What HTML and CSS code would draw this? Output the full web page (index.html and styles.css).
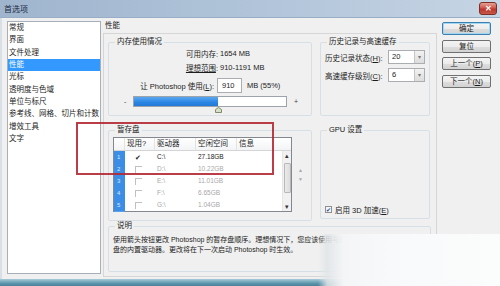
FILE: index.html
```html
<!DOCTYPE html>
<html lang="zh-CN">
<head>
<meta charset="utf-8">
<title>首选项</title>
<link rel="stylesheet" href="styles.css">
</head>
<body>
<div class="window">
  <div class="titlebar">
    <span class="title">首选项</span>
    <span class="close">✕</span>
  </div>
  <div class="content">
    <ul class="sidebar">
      <li>常规</li>
      <li>界面</li>
      <li>文件处理</li>
      <li class="sel">性能</li>
      <li>光标</li>
      <li>透明度与色域</li>
      <li>单位与标尺</li>
      <li>参考线、网格、切片和计数</li>
      <li>增效工具</li>
      <li>文字</li>
    </ul>
    <div class="main">
      <div class="main-title">性能</div>
      <div class="panel">
        <div class="row1">
          <fieldset class="box mem">
            <legend>内存使用情况</legend>
            <div class="mrow r1"><span class="mlabel">可用内存:</span><span class="mval">1654 MB</span></div>
            <div class="mrow r2"><span class="mlabel"><u>理想范围</u>:</span><span class="mval">910-1191 MB</span></div>
            <div class="mrow r3"><span class="mlabel narrow">让 Photoshop 使用(<u>L</u>):</span><span class="input">910</span><span class="unit">MB (55%)</span></div>
            <div class="slider">
              <span class="pm">-</span>
              <span class="track"><span class="fill"></span>
                <svg class="thumb" width="7" height="6" viewBox="0 0 7 6"><path d="M0.5 5.5 L0.5 2.5 L3.5 0.5 L6.5 2.5 L6.5 5.5 Z" fill="#d8e0c8" stroke="#7f8f6a" stroke-width="1"/></svg>
              </span>
              <span class="pm plus">+</span>
            </div>
          </fieldset>
          <fieldset class="box hist">
            <legend>历史记录与高速缓存</legend>
            <div class="hrow"><span class="hlabel">历史记录状态(<u>H</u>):</span><span class="select"><span class="sval">20</span><span class="dd">▾</span></span></div>
            <div class="hrow"><span class="hlabel">高速缓存级别(<u>C</u>):</span><span class="select"><span class="sval">6</span><span class="dd">▾</span></span></div>
          </fieldset>
        </div>
        <div class="row2">
          <fieldset class="box scratch">
            <legend>暂存盘</legend>
            <div class="scratch-body">
              <div class="table">
                <div class="thead">
                  <span></span><span>现用?</span><span>驱动器</span><span>空闲空间</span><span>信息</span>
                </div>
                <div class="tbody">
                  <div class="rows">
                    <div class="tr"><span class="idx">1</span><span class="chk"><span class="tick">✔</span></span><span>C:\</span><span>27.18GB</span><span></span></div>
                    <div class="tr off"><span class="idx">2</span><span class="chk"><span class="cb"></span></span><span>D:\</span><span>10.22GB</span><span></span></div>
                    <div class="tr off"><span class="idx">3</span><span class="chk"><span class="cb"></span></span><span>E:\</span><span>11.01GB</span><span></span></div>
                    <div class="tr off"><span class="idx">4</span><span class="chk"><span class="cb"></span></span><span>F:\</span><span>6.65GB</span><span></span></div>
                    <div class="tr off"><span class="idx">5</span><span class="chk"><span class="cb"></span></span><span>G:\</span><span>1.04GB</span><span></span></div>
                  </div>
                  <div class="scrollbar">
                    <span class="sarrow">▴</span>
                    <span class="sthumb"></span>
                    <span class="sarrow">▾</span>
                  </div>
                </div>
              </div>
              <div class="updown"><span>▲</span><span>▼</span></div>
            </div>
          </fieldset>
          <fieldset class="box gpu">
            <legend>GPU 设置</legend>
            <div class="gpu-check"><span class="gcb">✔</span><span>启用 3D 加速(<u>E</u>)</span></div>
          </fieldset>
        </div>
        <fieldset class="box desc">
          <legend>说明</legend>
          <p class="dtext">使用箭头按钮更改 Photoshop 的暂存盘顺序。理想情况下，您应该使用与启动盘不同的硬盘</p>
          <p class="dtext">盘的内置驱动器。更改将在下一次启动 Photoshop 时生效。</p>
        </fieldset>
      </div>
    </div>
    <div class="buttons">
      <span class="btn default">确定</span>
      <span class="btn">复位</span>
      <span class="btn">上一个(<u>P</u>)</span>
      <span class="btn">下一个(<u>N</u>)</span>
    </div>
  </div>
  <div class="bottombar"></div>
  <div class="redmark"></div>
  <div class="watermark"></div>
</div>
</body>
</html>
```
FILE: styles.css
```css
* { box-sizing: border-box; }
html, body { margin: 0; padding: 0; }
body {
  width: 500px;
  height: 286px;
  overflow: hidden;
  font-family: "Liberation Sans", "Noto Sans CJK SC", sans-serif;
  font-size: 7.5px;
  color: #1c1c1c;
  background: #f0f0f0;
}
u { text-decoration: underline; }

.window {
  position: relative;
  width: 500px;
  height: 286px;
  display: flex;
  flex-direction: column;
  background: #f0f0f0;
  overflow: hidden;
}

.titlebar {
  height: 18px;
  flex: none;
  display: flex;
  align-items: center;
  padding: 0 3px 0 4px;
  background: linear-gradient(90deg, #9fb5ce 0%, #b2c5da 55%, #c7d5e4 100%);
  border-bottom: 1px solid #98aec6;
}
.title { font-size: 8px; color: #1a2a3e; }
.close {
  margin-left: auto;
  width: 18px;
  height: 13px;
  border: 1px solid #7a3029;
  border-radius: 3px;
  background: linear-gradient(#e7a093 0%, #d0574a 45%, #b9352a 55%, #c9564a 100%);
  color: #fff;
  display: flex;
  align-items: center;
  justify-content: center;
  font-size: 8px;
  font-weight: bold;
}

.content {
  flex: 1;
  display: flex;
  padding: 3px 0 0 5px;
  border-left: 2px solid #d8dfe6;
}

.sidebar {
  list-style: none;
  margin: 0;
  padding: 0;
  width: 94px;
  height: 253px;
  background: #fff;
  border: 1px solid #a7afb8;
  flex: none;
}
.sidebar li {
  height: 12.33px;
  line-height: 12.33px;
  padding-left: 1px;
  white-space: nowrap;
  overflow: hidden;
}
.sidebar li.sel { background: #3399ff; color: #fff; }

.main {
  width: 334px;
  margin-left: 2px;
  flex: none;
}
.main-title {
  height: 12px;
  line-height: 10px;
  padding-left: 2px;
}
.panel {
  height: 244px;
  border: 1px solid #d6d6d6;
  padding: 3px 0 0 4px;
}

fieldset.box {
  margin: 0;
  padding: 0;
  border: 1px solid #d5dfe5;
  border-radius: 2px;
  min-width: 0;
}
fieldset.box legend {
  padding: 0 2px;
  margin-left: 6px;
  height: 10px;
  line-height: 10px;
}

.row1 { display: flex; gap: 8px; height: 79px; }
.mem { width: 204px; height: 79px; }
.hist { width: 110px; height: 79px; }

.mrow { display: flex; align-items: center; white-space: nowrap; }
.mrow.r1 { height: 13px; }
.mrow.r2 { height: 15px; }
.mrow.r3 { height: 16px; margin-top: 2px; }
.mlabel { width: 109px; text-align: right; }
.mlabel.narrow { width: 105px; }
.mval { margin-left: 2px; }
.input {
  margin-left: 3px;
  width: 25px;
  height: 15px;
  line-height: 13px;
  border: 1px solid #abadb3;
  background: #fff;
  padding-left: 4px;
}
.unit { margin-left: 5px; }

.slider {
  display: flex;
  align-items: center;
  height: 11px;
  margin-top: 3px;
  padding-left: 15px;
}
.pm { width: 9px; font-size: 7px; color: #444; }
.pm.plus { width: auto; margin-left: 7px; }
.track {
  position: relative;
  width: 154px;
  height: 11px;
  border: 1px solid #9da3aa;
  background: #fff;
  display: block;
}
.fill {
  display: block;
  width: 84px;
  height: 9px;
  background: linear-gradient(#5aa6f0, #2a85e2 60%, #2479d4);
}
.thumb { position: absolute; left: 81px; top: 10px; }

.hrow {
  display: flex;
  align-items: center;
  height: 18px;
  padding-left: 4px;
  white-space: nowrap;
}
.hrow:first-of-type { margin-top: 1px; }
.hlabel { width: 63px; }
.select {
  width: 37px;
  height: 14px;
  border: 1px solid #abadb3;
  background: #fff;
  display: flex;
  align-items: stretch;
}
.sval { flex: 1; padding-left: 3px; line-height: 12px; }
.dd {
  width: 10px;
  background: linear-gradient(#f2f2f2, #dcdcdc);
  border-left: 1px solid #c5c5c5;
  color: #777;
  font-size: 6px;
  line-height: 12px;
  text-align: center;
}

.row2 { display: flex; gap: 8px; margin-top: 9px; align-items: flex-start; }
.scratch { width: 204px; height: 96px; }
.gpu {
  width: 110px;
  height: 94px;
  display: flex;
  flex-direction: column;
  justify-content: flex-end;
}

.scratch-body {
  display: flex;
  align-items: center;
  margin: 2px 0 0 4px;
}
.table {
  width: 179px;
  height: 75px;
  border: 1px solid #828790;
  background: #fff;
}
.thead, .tr {
  display: grid;
  grid-template-columns: 11px 30px 41px 41px 1fr;
}
.thead {
  height: 13px;
  border-bottom: 1px solid #d5d5d5;
  background: linear-gradient(#ffffff, #f3f4f6);
}
.thead span {
  line-height: 12px;
  padding-left: 2px;
  border-right: 1px solid #e2e3e5;
  white-space: nowrap;
}
.thead span:last-child { border-right: none; }
.tbody { display: flex; height: 60px; }
.rows { flex: 1; }
.tr { height: 12px; line-height: 12px; font-size: 6.5px; }
.tr span { padding-left: 2px; white-space: nowrap; }
.tr .idx {
  background: #3b8de6;
  color: #dbe9fb;
  padding-left: 3px;
  font-size: 6px;
  border-bottom: 1px solid #5aa0ee;
}
.tr.off { color: #a8a8a8; }
.chk { display: flex; align-items: center; padding-left: 10px !important; }
.tick { font-size: 7px; color: #222; padding-left: 0 !important; }
.cb {
  display: block;
  width: 7px;
  height: 7px;
  border-top: 1px solid #c0c0c0;
  border-left: 1px solid #c0c0c0;
  padding-left: 0 !important;
}
.scrollbar {
  width: 9px;
  background: #f1f1f1;
  border-left: 1px solid #e6e6e6;
  display: flex;
  flex-direction: column;
  align-items: center;
}
.sarrow { height: 9px; line-height: 9px; font-size: 7px; color: #333; }
.sthumb {
  width: 7px;
  height: 30px;
  margin: 3px 0 auto;
  border: 1px solid #b8b8b8;
  border-radius: 1px;
  background: linear-gradient(90deg, #eaeaea, #dcdcdc);
}
.updown {
  display: flex;
  flex-direction: column;
  margin-left: 6px;
  color: #a8a8a8;
  font-size: 5px;
  line-height: 9px;
}

.gpu-check {
  display: flex;
  align-items: center;
  padding: 0 0 3px 4px;
  white-space: nowrap;
}
.gcb {
  width: 7px;
  height: 7px;
  border: 1px solid #8f8f8f;
  background: #f4f6fb;
  color: #1d4e9a;
  font-size: 6px;
  line-height: 6px;
  text-align: center;
  margin-right: 3px;
}

.desc { width: 323px; height: 51px; margin-top: 4px; overflow: hidden; }
.desc legend { margin-left: 8px; }
.dtext {
  margin: 0;
  padding-left: 4px;
  font-size: 7px;
  line-height: 9.5px;
  white-space: nowrap;
}
.dtext:first-of-type { margin-top: 4px; }

.buttons {
  display: flex;
  flex-direction: column;
  gap: 4.5px;
  margin: 1px 0 0 5px;
  width: 49px;
}
.btn {
  display: block;
  height: 13px;
  line-height: 11px;
  text-align: center;
  border: 1px solid #707070;
  border-radius: 2px;
  background: linear-gradient(#f4f4f4 0%, #ececec 50%, #dedede 51%, #d2d2d2 100%);
  white-space: nowrap;
}
.btn.default {
  border-color: #3c7fb1;
  box-shadow: inset 0 0 0 1px #9fd7f2;
}

.bottombar {
  height: 7px;
  flex: none;
  background: linear-gradient(#a6cbd8, #5e97ad 60%, #4a8399);
}

.redmark {
  position: absolute;
  left: 76px;
  top: 122px;
  width: 198px;
  height: 53px;
  border: 2px solid rgba(178, 40, 52, 0.9);
}
.watermark {
  position: absolute;
  left: 318px;
  top: 234px;
  width: 182px;
  height: 52px;
  background: linear-gradient(90deg, rgba(230,233,235,0) 0%, rgba(225,229,232,0.85) 5%, #f3f5f6 14%, #f8f9fa 40%, #fbfcfc 100%);
}
```
